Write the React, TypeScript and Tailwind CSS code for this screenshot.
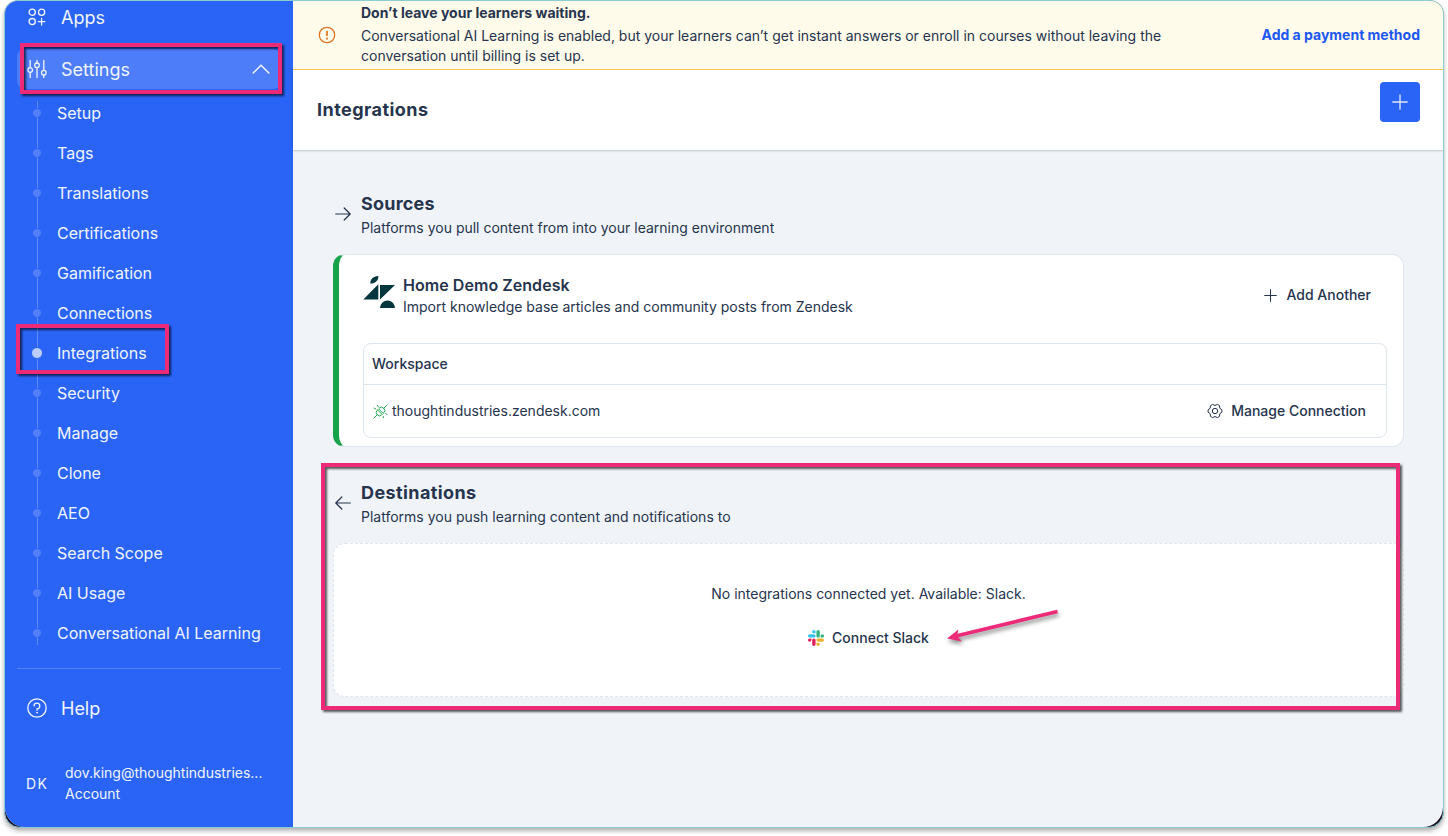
import React from 'react';
import clsx from 'clsx';

const settingsItems = [
  'Setup',
  'Tags',
  'Translations',
  'Certifications',
  'Gamification',
  'Connections',
  'Integrations',
  'Security',
  'Manage',
  'Clone',
  'AEO',
  'Search Scope',
  'AI Usage',
  'Conversational AI Learning',
];

interface IconProps {
  className?: string;
}

function AppsIcon({ className }: IconProps) {
  return (
    <svg viewBox="0 0 18 18" fill="none" stroke="currentColor" strokeWidth="1.3" strokeLinecap="round" className={className}>
      <circle cx="4.2" cy="4.2" r="3.1" />
      <circle cx="13.6" cy="4.2" r="3.1" />
      <circle cx="4.2" cy="13.6" r="3.1" />
      <path d="M13.6 10.3v6.6M10.3 13.6h6.6" />
    </svg>
  );
}

function SlidersIcon({ className }: IconProps) {
  return (
    <svg viewBox="0 0 20 20" fill="none" stroke="currentColor" strokeWidth="1.3" strokeLinecap="round" className={className}>
      <circle cx="3.2" cy="11" r="2.3" />
      <circle cx="10" cy="6.3" r="2.3" />
      <circle cx="16.8" cy="13.7" r="2.3" />
      <path d="M3.2 1.5v7.2M3.2 13.3v5.2M10 1.5V4M10 8.6v9.9M16.8 1.5v9.9M16.8 16v2.5" />
    </svg>
  );
}

function HelpIcon({ className }: IconProps) {
  return (
    <svg viewBox="0 0 20 20" fill="none" stroke="currentColor" strokeWidth="1.3" strokeLinecap="round" strokeLinejoin="round" className={className}>
      <circle cx="10" cy="10" r="9.2" />
      <path d="M7 7.9A2.9 2.9 0 1 1 10 11v1.2" />
      <circle cx="10" cy="14.7" r="0.5" fill="currentColor" strokeWidth="0.8" />
    </svg>
  );
}

function WarningIcon({ className }: IconProps) {
  return (
    <svg viewBox="0 0 18 18" fill="none" stroke="currentColor" strokeWidth="1.3" className={className}>
      <circle cx="9" cy="9" r="7.7" />
      <path d="M9 4.7v5.4" strokeWidth="1.7" />
      <path d="M9 11.6v1.8" strokeWidth="1.8" />
    </svg>
  );
}

function PlusIcon({ className }: IconProps) {
  return (
    <svg viewBox="0 0 16 16" fill="none" stroke="currentColor" strokeWidth="1.3" strokeLinecap="round" className={className}>
      <path d="M8 0.8v14.4M0.8 8h14.4" />
    </svg>
  );
}

function ArrowIcon({ className }: IconProps) {
  return (
    <svg viewBox="0 0 16 14" fill="none" stroke="currentColor" strokeWidth="1.2" strokeLinecap="round" strokeLinejoin="round" className={className}>
      <path d="M0.7 7h14.4M9.2 1l6 6-6 6" />
    </svg>
  );
}

function ZendeskIcon({ className }: IconProps) {
  return (
    <svg viewBox="0 0 32 32" fill="currentColor" className={className}>
      <path d="M15.3 8.2v15.2H0.3zM17 9h15L17 23.4z" />
      <path d="M17 32a7.5 7.5 0 0 1 15 0z" />
      <path d="M7.4 7.6C6.9 3.4 10 .2 15.3 0c.4 4.2-2.7 7.4-7.9 7.6z" />
    </svg>
  );
}

function PlugIcon({ className }: IconProps) {
  return (
    <svg viewBox="0 0 16 16" fill="none" stroke="currentColor" strokeWidth="1" strokeLinecap="round" strokeLinejoin="round" className={className}>
      <path d="M1 15l3.7-3.7M11.3 4.7L15 1" />
      <path d="M4.9 6.3l4.8 4.8-.6.6a3.1 3.1 0 0 1-4.3 0l-.5-.5a3.1 3.1 0 0 1 0-4.3z" />
      <path d="M6.3 4.9l.6-.6a3.1 3.1 0 0 1 4.3 0l.5.5a3.1 3.1 0 0 1 0 4.3l-.6.6z" />
      <path d="M1.2 4.4l1.6.8M4.8 1.6l.8 1.6M10.8 13l.5 1.6M13.4 10.4l1.4.6" />
    </svg>
  );
}

function GearIcon({ className }: IconProps) {
  return (
    <svg viewBox="0 0 16 16" fill="none" stroke="currentColor" strokeWidth="1" strokeLinejoin="round" className={className}>
      <circle cx="8" cy="8" r="2.7" />
      <path d="M14.9 6.8v2.4l-2.1 1.5-.3 2.7-2.1 1.2L8 13.5l-2.4 1.1-2.1-1.2-.3-2.7-2.1-1.5V6.8l2.1-1.5.3-2.7 2.1-1.2L8 2.5l2.4-1.1 2.1 1.2.3 2.7z" />
    </svg>
  );
}

function SlackIcon({ className }: IconProps) {
  return (
    <svg viewBox="0 0 122.8 122.8" className={className}>
      <path fill="#e01e5a" d="M25.8 77.6c0 7.1-5.8 12.9-12.9 12.9S0 84.7 0 77.6s5.8-12.9 12.9-12.9h12.9v12.9zm6.5 0c0-7.1 5.8-12.9 12.9-12.9s12.9 5.8 12.9 12.9v32.3c0 7.1-5.8 12.9-12.9 12.9s-12.9-5.8-12.9-12.9V77.6z" />
      <path fill="#36c5f0" d="M45.2 25.8c-7.1 0-12.9-5.8-12.9-12.9S38.1 0 45.2 0s12.9 5.8 12.9 12.9v12.9H45.2zm0 6.5c7.1 0 12.9 5.8 12.9 12.9s-5.8 12.9-12.9 12.9H12.9C5.8 58.1 0 52.3 0 45.2s5.8-12.9 12.9-12.9h32.3z" />
      <path fill="#2eb67d" d="M97 45.2c0-7.1 5.8-12.9 12.9-12.9s12.9 5.8 12.9 12.9-5.8 12.9-12.9 12.9H97V45.2zm-6.5 0c0 7.1-5.8 12.9-12.9 12.9s-12.9-5.8-12.9-12.9V12.9C64.7 5.8 70.5 0 77.6 0s12.9 5.8 12.9 12.9v32.3z" />
      <path fill="#ecb22e" d="M77.6 97c7.1 0 12.9 5.8 12.9 12.9s-5.8 12.9-12.9 12.9-12.9-5.8-12.9-12.9V97h12.9zm0-6.5c-7.1 0-12.9-5.8-12.9-12.9s5.8-12.9 12.9-12.9h32.3c7.1 0 12.9 5.8 12.9 12.9s-5.8 12.9-12.9 12.9H77.6z" />
    </svg>
  );
}

function Sidebar() {
  return (
    <aside className="flex w-[288px] shrink-0 flex-col bg-[#2a64f6] px-3 text-[#f1f5ff]">
      <div className="-mt-1 flex h-10 items-center pl-[11px] text-lg">
        <AppsIcon className="size-[18px]" />
        <span className="ml-[15px] pt-px">Apps</span>
      </div>
      <div className="mt-3 flex h-10 items-center rounded-lg bg-[#4d7df8] pr-[11px] pl-2.5 text-lg">
        <SlidersIcon className="size-5" />
        <span className="ml-3.5 flex-1 pt-px">Settings</span>
        <svg viewBox="0 0 18 10" fill="none" stroke="currentColor" strokeWidth="1.5" strokeLinecap="round" className="h-2.5 w-[18px]">
          <path d="M1.2 9L9 1.2 16.8 9" />
        </svg>
      </div>
      <ul className="relative mt-1">
        <span className="absolute top-2 bottom-2 left-5 w-px bg-white/25" />
        {settingsItems.map((item) => (
          <li key={item} className="flex h-10 items-center">
            <span className="relative flex w-10 justify-center">
              <span
                className={clsx(
                  'box-content rounded-full border border-[#2a64f6]',
                  item === 'Integrations' ? 'size-2.5 bg-[#bccefd]' : 'size-2 bg-[#527ff8]',
                )}
              />
            </span>
            <span className="text-base">{item}</span>
          </li>
        ))}
      </ul>
      <div className="mt-[15px] h-px bg-white/20" />
      <div className="mt-[19px] flex h-10 items-center pl-2.5 text-lg">
        <HelpIcon className="size-5" />
        <span className="ml-3.5 pt-px">Help</span>
      </div>
      <div className="mt-[34px] flex items-center pl-[9px]">
        <span className="w-[39px] pt-0.5 text-sm tracking-[0.1em]">DK</span>
        <div className="text-sm leading-[21px]">
          <div>dov.king@thoughtindustries...</div>
          <div>Account</div>
        </div>
      </div>
    </aside>
  );
}

function BillingBanner() {
  return (
    <div className="flex h-[69px] items-center border-b border-[#f9cb4f] bg-[#fffbeb] pr-[23px] pl-[25px] text-sm">
      <WarningIcon className="mb-px size-[18px] text-[#dd7422]" />
      <div className="ml-[25px] w-[830px] pb-px">
        <div className="leading-5 font-bold">Don’t leave your learners waiting.</div>
        <p className="mt-[3px] leading-5">
          Conversational AI Learning is enabled, but your learners can’t get instant answers or enroll in courses without leaving the
          conversation until billing is set up.
        </p>
      </div>
      <a className="ml-auto font-bold text-[#1b57f1]">Add a payment method</a>
    </div>
  );
}

interface SectionTitleProps {
  title: string;
  description: string;
  flipped?: boolean;
}

function SectionTitle({ title, description, flipped }: SectionTitleProps) {
  return (
    <div className="flex items-center pl-0.5">
      <ArrowIcon className={clsx('mb-0.5 h-3.5 w-4', flipped && 'rotate-180')} />
      <div className="ml-2.5">
        <h2 className={clsx('text-lg leading-[26px] font-bold', flipped ? 'tracking-[0.4px]' : 'tracking-[0.2px]')}>{title}</h2>
        <p className="text-sm leading-[22px]">{description}</p>
      </div>
    </div>
  );
}

function ZendeskCard() {
  return (
    <div className="mt-[15px] h-[193px] rounded-xl border border-l-[6px] border-[#e0e7ef] border-l-[#16a34a] bg-white pr-4 pl-6">
      <div className="flex h-[88px] items-start pt-[19px]">
        <ZendeskIcon className="mt-0.5 size-8 text-[#03363d]" />
        <div className="ml-2">
          <h3 className="text-base leading-[22px] font-semibold tracking-[0.05px]">Home Demo Zendesk</h3>
          <p className="text-sm leading-[22px]">Import knowledge base articles and community posts from Zendesk</p>
        </div>
        <button className="mt-[11px] mr-4 ml-auto flex items-center text-sm font-medium">
          <PlusIcon className="mr-2.5 size-[13px]" />
          Add Another
        </button>
      </div>
      <div className="h-[95px] rounded-lg border border-[#dde5ee]">
        <div className="flex h-[41px] items-center border-b border-[#dde5ee] px-2 text-sm font-medium">Workspace</div>
        <div className="flex h-[52px] items-center pr-5 pl-[9px] text-sm">
          <PlugIcon className="mr-1 size-[15px] text-[#16a34a]" />
          <span>thoughtindustries.zendesk.com</span>
          <button className="ml-auto flex items-center font-medium">
            <GearIcon className="mr-2 size-4" />
            Manage Connection
          </button>
        </div>
      </div>
    </div>
  );
}

function Highlight({ className }: IconProps) {
  return (
    <div
      className={clsx(
        'pointer-events-none absolute border-4 border-[#ec2a78] drop-shadow-[2px_2px_1px_rgba(0,0,0,0.65)]',
        className,
      )}
    />
  );
}

export default function App() {
  return (
    <div className="relative h-[836px] w-[1448px] overflow-hidden bg-white pl-1 font-['Inter',sans-serif] text-[#26344d]">
      <div className="h-[828px] w-[1440px] overflow-hidden rounded-t-[14px] rounded-b-[16px] border border-[#8accd0] bg-[#1d0f24] shadow-[0_3px_4px_rgba(0,0,0,0.3)]">
        <div className="flex h-full overflow-hidden rounded-b-[20px] bg-[#f0f4f9]">
          <Sidebar />
          <main className="flex-1">
            <BillingBanner />
            <header className="flex h-20 items-start justify-between bg-white pt-3 pr-[23px] pl-6 shadow-[0_1px_2px_rgba(0,0,0,0.2)]">
              <h1 className="mt-[15px] text-lg leading-[26px] font-bold tracking-[0.45px]">Integrations</h1>
              <button className="flex size-10 items-center justify-center rounded bg-[#2a64f6] text-[#dfe8ff]">
                <PlusIcon className="size-4" />
              </button>
            </header>
            <div className="pt-[41px] pr-[39px] pl-10">
              <SectionTitle title="Sources" description="Platforms you pull content from into your learning environment" />
              <ZendeskCard />
              <div className="mt-[33px]">
                <SectionTitle title="Destinations" description="Platforms you push learning content and notifications to" flipped />
              </div>
              <div className="mt-[15px] flex h-[154px] flex-col items-center rounded-xl border border-dashed border-[#dde5ee] bg-white pt-10 text-sm">
                <p className="leading-5">No integrations connected yet. Available: Slack.</p>
                <button className="mt-6 flex items-center leading-5 font-medium">
                  <SlackIcon className="mr-2 size-4" />
                  Connect Slack
                </button>
              </div>
            </div>
          </main>
        </div>
      </div>

      <Highlight className="top-[43px] left-5 h-[51px] w-[262px]" />
      <Highlight className="top-[324px] left-4 h-[50px] w-[153px]" />
      <Highlight className="top-[463px] left-[321px] h-[247px] w-[1079px]" />
      <svg
        viewBox="0 0 120 44"
        className="pointer-events-none absolute top-[604px] left-[942px] h-11 w-[120px] drop-shadow-[1px_3px_2px_rgba(0,0,0,0.45)]"
      >
        <path d="M115.5 7.5L14 32" fill="none" stroke="#ec2a78" strokeWidth="3.6" />
        <path d="M5 34.5L16.5 25.5 15 32l5 5.5z" fill="#ec2a78" />
      </svg>
    </div>
  );
}
